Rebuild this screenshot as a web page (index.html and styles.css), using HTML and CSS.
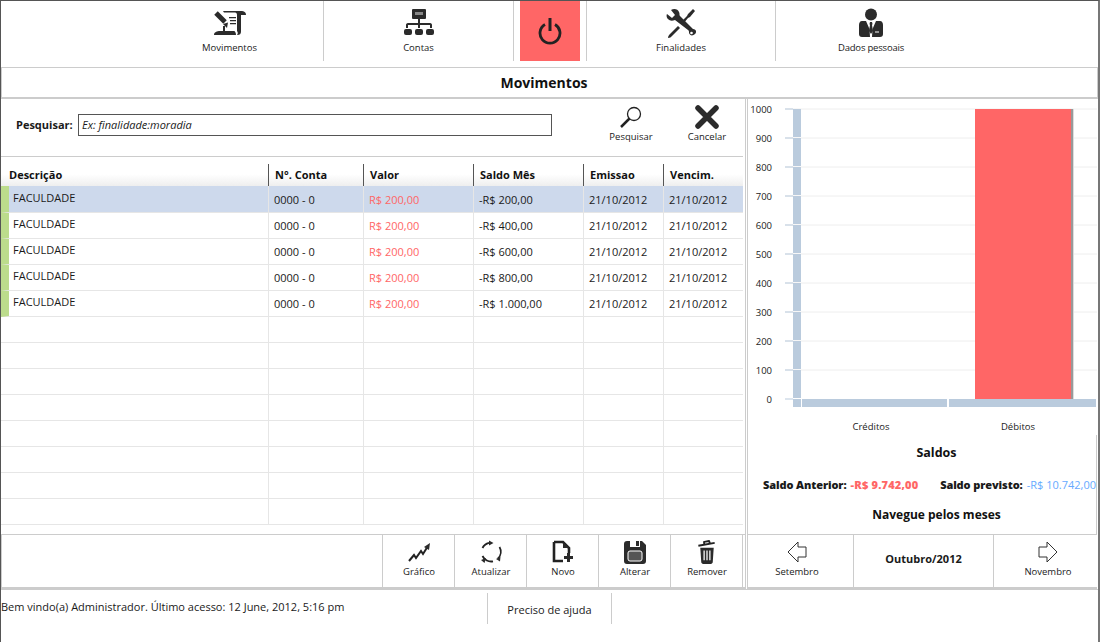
FILE: index.html
```html
<!DOCTYPE html>
<html lang="pt-BR">
<head>
  <meta charset="UTF-8" />
  <title>Movimentos</title>
  <link rel="stylesheet" href="styles.css">
</head>
<body>
<div class="page">

  <!-- Menu principal -->
  <nav class="topnav">
    <a class="nav-item nav-first">
      <svg width="34" height="26" viewBox="0 0 34 26"><path class="ic" d="M10 1h18c3 0 5 1 5 4h-5v16c0 3-1 4-4 4 1-1 1-3 0-4V5c0-2-1-2.500-3-2.500H11z"/><path d="M3 3l9 9" stroke="#2b2b2b" stroke-width="5"/><path class="ic" d="M10 14l4 4 1-5.500zM1 25c0-3 3-4 6-4h3v-5h2v5h9c1 0 2 2 2 4z"/><path class="ic" d="M16 7h7v1.300h-7zM17 10h6v1.300h-6zM17 13h6v1.300h-6z"/></svg>
      <span>Movimentos</span>
    </a>
    <a class="nav-item nav-contas">
      <svg width="30" height="28" viewBox="0 0 30 28"><path class="ic" d="M9 0h12a1 1 0 0 1 1 1v8a1 1 0 0 1-1 1H9a1 1 0 0 1-1-1V1a1 1 0 0 1 1-1z"/><path class="ic" d="M14 10h2v4h10c1.500 0 2 1 2 2v3h-2v-3H16v3h-2v-3H4v3H2v-3c0-1 .5-2 2-2h10z"/><rect class="ic" x="0" y="20" width="8" height="6" rx="2"/><rect class="ic" x="11" y="20" width="8" height="6" rx="2"/><rect class="ic" x="22" y="20" width="8" height="6" rx="2"/><rect x="11" y="3" width="8" height="3" fill="#888"/></svg>
      <span>Contas</span>
    </a>
    <a class="nav-power">
      <svg width="24" height="28" viewBox="0 0 24 28"><path d="M7 7.500a10 10 0 1 0 10 0" fill="none" stroke="#222" stroke-width="2.800"/><path d="M12 1v13" stroke="#222" stroke-width="3"/></svg>
    </a>
    <a class="nav-item nav-fin">
      <svg width="30" height="30" viewBox="0 0 30 30"><path class="ic" d="M1 6l5 4 3-3-4-5c3-2 7-1 8 2 1 2 0 3 1 4l13 13c3 0 4 3 2 5s-5 2-6-1c0-2 0-2-1-3L9 12c-3 1-5 1-7-1-1-1-2-3-1-5z"/><circle cx="25.500" cy="25" r="1.300" fill="#fff"/><path class="ic" d="M22 6l5-5 2 2-5 6-2 1-5 6-2-2 6-6zM12 18l2 2-8 8c-1 1-2 2-4 2 0-2 1-3 2-4z"/></svg>
      <span>Finalidades</span>
    </a>
    <a class="nav-item nav-dados">
      <svg width="24" height="30" viewBox="0 0 24 30"><circle class="ic" cx="12" cy="6.500" r="6"/><path class="ic" d="M3 13h4l3.500 8 .5 8H3c-2 0-3-1-3-3v-9c0-2 1-4 3-4zM17 13h4c2 0 3 2 3 4v9c0 2-1 3-3 3h-8l.5-8z"/><path class="ic" d="M11 14h2l.5 2-.5 1 1 6-2 3-2-3 1-6-.5-1z"/><path d="M16 24h4" stroke="#fff"/></svg>
      <span>Dados pessoais</span>
    </a>
  </nav>

  <h1 class="page-title">Movimentos</h1>

  <div class="content">
    <section class="left-panel">
      <div class="search-row">
        <label class="search-label">Pesquisar:</label>
        <div class="search-input">Ex: finalidade:moradia</div>
        <div class="search-actions">
          <a class="tool">
            <svg width="24" height="24" viewBox="0 0 24 24"><circle cx="15" cy="9" r="6.500" fill="none" stroke="#222" stroke-width="1.300"/><path d="M10.500 13.500L2 22" stroke="#222" stroke-width="2.500"/></svg>
            <span>Pesquisar</span>
          </a>
          <a class="tool">
            <svg width="24" height="24" viewBox="0 0 24 24"><path d="M3 3l18 18M21 3L3 21" stroke="#2b2b2b" stroke-width="5.500" stroke-linecap="round"/></svg>
            <span>Cancelar</span>
          </a>
        </div>
      </div>

      <table class="grid">
        <colgroup>
          <col class="c-desc"><col class="c-conta"><col class="c-valor"><col class="c-saldo"><col class="c-emis"><col class="c-venc">
        </colgroup>
        <thead>
          <tr><th>Descrição</th><th>N°. Conta</th><th>Valor</th><th>Saldo Mês</th><th>Emissao</th><th>Vencim.</th></tr>
        </thead>
        <tbody>
          <tr class="selected"><td class="desc">FACULDADE</td><td>0000 - 0</td><td class="neg">R$ 200,00</td><td>-R$ 200,00</td><td>21/10/2012</td><td>21/10/2012</td></tr>
          <tr><td class="desc">FACULDADE</td><td>0000 - 0</td><td class="neg">R$ 200,00</td><td>-R$ 400,00</td><td>21/10/2012</td><td>21/10/2012</td></tr>
          <tr><td class="desc">FACULDADE</td><td>0000 - 0</td><td class="neg">R$ 200,00</td><td>-R$ 600,00</td><td>21/10/2012</td><td>21/10/2012</td></tr>
          <tr><td class="desc">FACULDADE</td><td>0000 - 0</td><td class="neg">R$ 200,00</td><td>-R$ 800,00</td><td>21/10/2012</td><td>21/10/2012</td></tr>
          <tr><td class="desc">FACULDADE</td><td>0000 - 0</td><td class="neg">R$ 200,00</td><td>-R$ 1.000,00</td><td>21/10/2012</td><td>21/10/2012</td></tr>
          <tr class="empty"><td></td><td></td><td></td><td></td><td></td><td></td></tr>
          <tr class="empty"><td></td><td></td><td></td><td></td><td></td><td></td></tr>
          <tr class="empty"><td></td><td></td><td></td><td></td><td></td><td></td></tr>
          <tr class="empty"><td></td><td></td><td></td><td></td><td></td><td></td></tr>
          <tr class="empty"><td></td><td></td><td></td><td></td><td></td><td></td></tr>
          <tr class="empty"><td></td><td></td><td></td><td></td><td></td><td></td></tr>
          <tr class="empty"><td></td><td></td><td></td><td></td><td></td><td></td></tr>
          <tr class="empty"><td></td><td></td><td></td><td></td><td></td><td></td></tr>
        </tbody>
      </table>

      <div class="toolbar">
        <a class="tool-btn">
          <svg width="24" height="24" viewBox="0 0 24 24"><path d="M2 21l5-6 2 3 5-7 2 3 5-8" fill="none" stroke="#222" stroke-width="2"/><path class="ic" d="M23 3l-1 7-5-3z"/></svg>
          <span>Gráfico</span>
        </a>
        <a class="tool-btn">
          <svg width="24" height="24" viewBox="0 0 24 24"><path d="M3.500 8A9.500 9.500 0 0 1 10 2.800M20.500 7A9.500 9.500 0 0 1 19 18.500M14 21.300A9.500 9.500 0 0 1 3.500 16" fill="none" stroke="#222" stroke-width="1.800"/><path class="ic" d="M10 .5l4.500 2.500-4.500 2.500zM21.500 16.500l-.5 5-4-2.500zM2 20l5-2-1.500 5z"/></svg>
          <span>Atualizar</span>
        </a>
        <a class="tool-btn">
          <svg width="22" height="24" viewBox="0 0 22 24"><path d="M2 2h9l6 6v5M11 21H2V2" fill="none" stroke="#222" stroke-width="2.600"/><path class="ic" d="M11 2l6 6h-6zM15 13h3v3h3v3h-3v3h-3v-3h-3v-3h3z"/></svg>
          <span>Novo</span>
        </a>
        <a class="tool-btn">
          <svg width="22" height="24" viewBox="0 0 22 24"><path class="ic" d="M3 1h3v6h10V1h2l4 4v16c0 2-1 3-3 3H3c-2 0-3-1-3-3V4c0-2 1-3 3-3z"/><rect x="12" y="1" width="3" height="5" fill="#2b2b2b"/><rect x="4" y="11" width="14" height="10" rx="2" fill="#555" stroke="#fff"/></svg>
          <span>Alterar</span>
        </a>
        <a class="tool-btn">
          <svg width="20" height="25" viewBox="0 0 20 25"><path d="M1 6l17-3M7 4l0-2 5-1 1 2" fill="none" stroke="#222" stroke-width="2"/><path class="ic" d="M3 8h14l-1 15c0 1-1 2-2 2H6c-1 0-2-1-2-2z"/><path d="M7 11v10M10 11v10M13 11v10" stroke="#fff" stroke-width="1.300"/></svg>
          <span>Remover</span>
        </a>
      </div>
    </section>

    <section class="right-panel">
      <svg class="chart" width="349" height="336" viewBox="0 0 349 336">
        <g transform="translate(-2,-1)">
          <path class="chart-grid" d="M39 11h312M39 40h312M39 69h312M39 98h312M39 127h312M39 156h312M39 185h312M39 214h312M39 243h312M39 272h312"/>
          <path class="chart-ticks" d="M39 11h8M39 40h8M39 69h8M39 98h8M39 127h8M39 156h8M39 185h8M39 214h8M39 243h8M39 272h8M39 301h8"/>
          <g fill="#bacbdd">
            <rect x="47" y="11" width="8" height="28"/><rect x="47" y="40" width="8" height="28"/><rect x="47" y="69" width="8" height="28"/><rect x="47" y="98" width="8" height="28"/><rect x="47" y="127" width="8" height="28"/><rect x="47" y="156" width="8" height="28"/><rect x="47" y="185" width="8" height="28"/><rect x="47" y="214" width="8" height="28"/><rect x="47" y="243" width="8" height="28"/><rect x="47" y="272" width="8" height="28"/><rect x="47" y="301" width="8" height="8"/>
            <rect x="56" y="301" width="145" height="8"/><rect x="203" y="301" width="147" height="8"/>
          </g>
          <rect x="229" y="11" width="99" height="290" fill="#ddd"/>
          <rect x="229" y="11" width="98" height="290" fill="#999"/>
          <rect x="229" y="11" width="96" height="290" fill="#ff6666"/>
        </g>
        <g class="chart-y" text-anchor="end">
          <text x="24" y="14">1000</text><text x="24" y="43">900</text><text x="24" y="72">800</text><text x="24" y="101">700</text><text x="24" y="130">600</text><text x="24" y="159">500</text><text x="24" y="188">400</text><text x="24" y="217">300</text><text x="24" y="246">200</text><text x="24" y="275">100</text><text x="24" y="304">0</text>
        </g>
        <g class="chart-x" text-anchor="middle">
          <text x="123" y="331">Créditos</text><text x="270" y="331">Débitos</text>
        </g>
      </svg>

      <div class="saldo-box">
        <h2 class="sub-title saldo-title">Saldos</h2>
        <div class="saldos">
          <b class="lbl-ant">Saldo Anterior:</b><b class="neg val-ant">-R$ 9.742,00</b>
          <b class="lbl-prev">Saldo previsto:</b><span class="pos">-R$ 10.742,00</span>
        </div>
        <h2 class="sub-title nav-title">Navegue pelos meses</h2>
      </div>

      <div class="month-nav">
        <a class="tool-btn month-prev">
          <svg width="20" height="22" viewBox="0 0 20 22"><path d="M1 11L11 1v5h8v10h-8v5z" fill="#fff" stroke="#333"/></svg>
          <span>Setembro</span>
        </a>
        <div class="month-current">Outubro/2012</div>
        <a class="tool-btn month-next">
          <svg width="20" height="22" viewBox="0 0 20 22"><path d="M19 11L9 1v5H1v10h8v5z" fill="#fff" stroke="#333"/></svg>
          <span>Novembro</span>
        </a>
      </div>
    </section>
  </div>

  <footer class="footer">
    <div class="welcome">Bem vindo(a) Administrador. Último acesso: 12 June, 2012, 5:16 pm</div>
    <a class="help">Preciso de ajuda</a>
  </footer>
</div>
</body>
</html>
```

FILE: styles.css
```css
html, body {
  margin: 0;
  padding: 0;
  background: #fff;
}
body {
  font-family: 'Open Sans', 'Noto Sans', sans-serif;
  color: #1a1a1a;
  overflow: hidden;
}
.page {
  width: 1100px;
  height: 642px;
  box-sizing: border-box;
  border-top: 1px solid #555;
  border-left: 1px solid #555;
  border-right: 2px solid #777;
  display: flex;
  flex-direction: column;
}
.ic {
  fill: #2b2b2b;
}

/* Menu principal */
.topnav {
  display: flex;
  height: 60px;
  margin-bottom: 6px;
}
.nav-item {
  display: flex;
  flex-direction: column;
  align-items: center;
  font-size: 9.500px;
  box-sizing: border-box;
  border-right: 1px solid #ccc;
}
.nav-item svg {
  height: 30px;
  margin-top: 7px;
  flex: none;
}
.nav-item span {
  margin-top: 3px;
}
.nav-first {
  width: 323px;
  padding-left: 135px;
}
.nav-contas {
  width: 190px;
}
.nav-power {
  width: 60px;
  margin: 0 6px;
  background: #ff6666;
  display: flex;
  align-items: center;
  justify-content: center;
}
.nav-fin {
  width: 190px;
  border-left: 1px solid #ccc;
}
.nav-dados {
  width: 190px;
  border-right: 0;
  letter-spacing: -.2px;
}

.page-title {
  margin: 0;
  height: 29px;
  line-height: 29px;
  padding-right: 11px;
  box-sizing: content-box;
  border: 1px solid #ccc;
  font-size: 14px;
  font-weight: 700;
  text-align: center;
  color: #111;
}

.content {
  display: flex;
  height: 491px;
  border-top: 1px solid #ccc;
}

/* Painel esquerdo */
.left-panel {
  width: 745px;
  flex: none;
  border-right: 1px solid #ccc;
  box-sizing: border-box;
  display: flex;
  flex-direction: column;
}
.search-row {
  height: 58px;
  width: 742px;
  box-sizing: border-box;
  border-bottom: 1px solid #ccc;
  display: flex;
  align-items: flex-start;
  padding-left: 15px;
}
.search-label {
  font-size: 11px;
  font-weight: 700;
  margin-top: 18px;
  width: 62px;
  flex: none;
}
.search-input {
  width: 474px;
  height: 22px;
  box-sizing: border-box;
  margin-top: 15px;
  border: 1px solid #555;
  padding-left: 3px;
  font-size: 11px;
  font-style: italic;
  line-height: 20px;
  flex: none;
}
.search-actions {
  display: flex;
  margin-left: 41px;
}
.tool {
  width: 76px;
  display: flex;
  flex-direction: column;
  align-items: center;
  font-size: 9.500px;
  padding-top: 6px;
}
.tool span {
  margin-top: 1px;
}

.grid {
  width: 742px;
  height: 368px;
  border-collapse: separate;
  border-spacing: 0;
  table-layout: fixed;
  font-size: 11px;
  flex: none;
}
.c-desc { width: 267px; }
.c-conta { width: 95px; }
.c-valor { width: 110px; }
.c-saldo { width: 110px; }
.c-emis { width: 80px; }
.c-venc { width: 80px; }
.grid th {
  height: 29px;
  padding: 5px 0 0 7px;
  text-align: left;
  font-size: 11px;
  font-weight: 700;
  color: #111;
  background:
    linear-gradient(#555, #555) left bottom / 1px 22px no-repeat,
    linear-gradient(#fff, #fff 60%, #eee);
  box-sizing: border-box;
}
.grid th:first-child {
  padding-left: 8px;
  background: linear-gradient(#fff, #fff 60%, #eee);
}
.grid td {
  height: 26px;
  padding: 0 0 0 5px;
  box-sizing: border-box;
  border-left: 1px solid #e6e6e6;
  border-bottom: 1px solid #e6e6e6;
  white-space: nowrap;
}
.grid td:first-child {
  border-left: 0;
}
.grid td.desc {
  padding: 0 0 4px 4px;
  border-left: 8px solid #bcdc8c;
}
.grid .selected td {
  height: 27px;
  padding-top: 1px;
  background: #cdd9ec;
}
.grid .selected td.desc {
  padding: 0 0 3px 4px;
}
.neg {
  color: #ff6666;
}
.pos {
  color: #66aaff;
}

.toolbar {
  display: flex;
  justify-content: flex-end;
  height: 52px;
  margin-top: 9px;
  padding-right: 2px;
  border-top: 1px solid #ccc;
  border-bottom: 2px solid #ccc;
  border-left: 1px solid #ccc;
  box-sizing: content-box;
}
.tool-btn {
  width: 72px;
  box-sizing: border-box;
  border-left: 1px solid #ccc;
  display: flex;
  flex-direction: column;
  align-items: center;
  font-size: 9.500px;
}
.toolbar .tool-btn {
  padding-left: 1px;
}
.toolbar .tool-btn:last-child {
  width: 73px;
  border-right: 1px solid #ccc;
}
.tool-btn svg {
  height: 24px;
  margin-top: 5px;
  flex: none;
}
.tool-btn span {
  margin-top: 1px;
}

/* Painel direito */
.right-panel {
  flex: none;
  width: 351px;
  box-sizing: border-box;
  display: flex;
  flex-direction: column;
  margin-left: 1px;
  border-left: 1px solid #ccc;
  overflow: hidden;
}
.chart {
  display: block;
  flex: none;
}
.chart-grid {
  fill: none;
  stroke: #eee;
}
.chart-ticks {
  fill: none;
  stroke: #bacbdd;
}
.chart text {
  font-size: 9.500px;
  fill: #222;
}
.saldo-box {
  border-right: 1px solid #ccc;
  margin-right: 1px;
  padding-top: 10px;
  height: 89px;
  box-sizing: content-box;
}
.sub-title {
  margin: 0;
  font-size: 12px;
  font-weight: 700;
  text-align: center;
  color: #111;
  padding-left: 29px;
}
.saldo-title {
  font-size: 12.500px;
  line-height: 16px;
}
.saldos {
  display: flex;
  margin-top: 16px;
  padding-left: 15px;
  font-size: 11px;
  white-space: nowrap;
  font-weight: 700;
}
.lbl-ant {
  width: 88px;
  letter-spacing: -.1px;
}
.val-ant {
  width: 90px;
  letter-spacing: .2px;
}
.lbl-prev {
  width: 87px;
  letter-spacing: -.1px;
}
.saldos .pos {
  font-weight: 400;
}
.nav-title {
  margin-top: 14px;
}
.month-nav {
  display: flex;
  height: 52px;
  border-top: 1px solid #ccc;
  border-bottom: 2px solid #ccc;
  margin-right: 1px;
  flex: none;
}
.month-prev {
  width: 105px;
  border-left: 0;
  padding-right: 7px;
}
.month-next {
  width: 103px;
  border-left: 0;
  padding-left: 5px;
}
.month-current {
  width: 141px;
  box-sizing: border-box;
  border-left: 1px solid #ccc;
  border-right: 1px solid #ccc;
  font-size: 11px;
  font-weight: 700;
  text-align: center;
  line-height: 48px;
}

/* Rodape */
.footer {
  display: flex;
  align-items: flex-start;
  border-top: 1px solid #ccc;
  margin-top: -1px;
  font-size: 11px;
}
.welcome {
  width: 486px;
  padding-top: 9px;
  white-space: nowrap;
}
.help {
  width: 123px;
  height: 31px;
  margin-top: 3px;
  border-left: 1px solid #ccc;
  border-right: 1px solid #ccc;
  text-align: center;
  line-height: 33px;
}
```
